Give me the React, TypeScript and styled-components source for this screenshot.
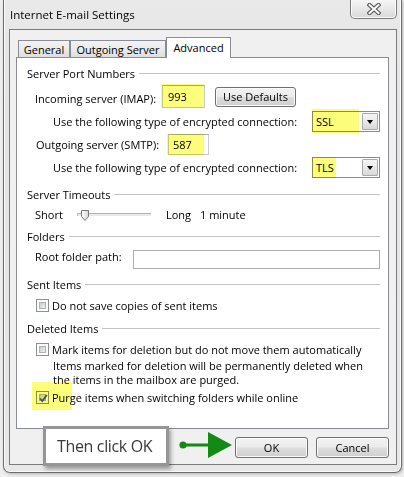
import React from "react";
import styled, { createGlobalStyle } from "styled-components";

const GlobalStyle = createGlobalStyle`
  html, body { margin: 0; padding: 0; }
  body {
    background: #eeeeee;
    width: 404px;
    height: 477px;
    overflow: hidden;
    font-family: "Open Sans", "Noto Sans", sans-serif;
    font-size: 11px;
    color: #000;
  }
`;

const Window = styled.div`
  box-sizing: border-box;
  width: 399px;
  height: 473px;
  margin-left: 3px;
  border: 1px solid #6d6d6d;
  border-top: none;
  border-radius: 0 0 7px 7px;
  background: linear-gradient(180deg, #e9e9e9 0%, #e3e3e3 25%, #e8e8e8 100%);
  box-shadow: inset 1px 0 0 #fafafa, inset -1px 0 0 #fafafa, inset 0 -1px 0 #fafafa,
    1px 1px 3px rgba(0, 0, 0, 0.25);
  display: flex;
  flex-direction: column;
`;

const TitleBar = styled.div`
  height: 29px;
  display: flex;
  align-items: flex-start;
  flex: none;
`;

const Title = styled.div`
  padding: 8px 0 0 6px;
  font-size: 11.5px;
  line-height: 14px;
  color: #000;
`;

const CloseButton = styled.div`
  box-sizing: border-box;
  margin-left: auto;
  margin-right: 4px;
  width: 47px;
  height: 19px;
  border: 1px solid #7a7a7a;
  border-top: none;
  border-radius: 0 0 5px 5px;
  background: linear-gradient(180deg, #f6f6f6 0%, #e6e6e6 55%, #d9d9d9 100%);
  box-shadow: inset 0 -1px 0 #fbfbfb, inset 1px 0 0 #fbfbfb, inset -1px 0 0 #fbfbfb;
  display: flex;
  align-items: center;
  justify-content: center;
`;

const Client = styled.div`
  box-sizing: border-box;
  position: relative;
  height: 436px;
  margin: 0 4px 0 5px;
  border: 1px solid #7b7b7b;
  background: #f0f0f0;
  padding: 7px 7px 6px 6px;
  display: flex;
  flex-direction: column;
`;

const TabRow = styled.div`
  display: flex;
  align-items: flex-end;
  height: 21px;
  padding-left: 2px;
  margin-bottom: -1px;
  position: relative;
  z-index: 1;
`;

const Tab = styled.div<{ $w: number; $active?: boolean }>`
  box-sizing: border-box;
  width: ${(p) => p.$w}px;
  height: ${(p) => (p.$active ? 21 : 17)}px;
  margin-bottom: ${(p) => (p.$active ? 0 : 1)}px;
  border: 1px solid #898c95;
  border-bottom: none;
  background: ${(p) =>
    p.$active ? "#ffffff" : "linear-gradient(180deg, #f3f3f3 0%, #ebebeb 50%, #dedede 100%)"};
  display: flex;
  align-items: center;
  justify-content: center;
  white-space: nowrap;
  padding-bottom: ${(p) => (p.$active ? 1 : 0)}px;
`;

const Panel = styled.div`
  box-sizing: border-box;
  height: 372px;
  background: #ffffff;
  border: 1px solid #898c95;
  padding: 7px 8px 0 10px;
  display: flex;
  flex-direction: column;
`;

const GroupHeader = styled.div<{ $mt: number }>`
  display: flex;
  align-items: center;
  height: 16px;
  margin-top: ${(p) => p.$mt}px;
  white-space: nowrap;
  &::after {
    content: "";
    flex: 1;
    height: 1px;
    background: #c4c4c4;
    margin-left: 4px;
  }
`;

const Row = styled.div<{ $h: number; $mt: number; $indent: number }>`
  display: flex;
  align-items: center;
  height: ${(p) => p.$h}px;
  margin-top: ${(p) => p.$mt}px;
  padding-left: ${(p) => p.$indent}px;
  white-space: nowrap;
`;

const Label = styled.span<{ $w?: number; $pt?: number }>`
  flex: none;
  width: ${(p) => (p.$w ? `${p.$w}px` : "auto")};
  padding-top: ${(p) => p.$pt ?? 0}px;
`;

const TopLabel = styled.span<{ $w: number }>`
  flex: none;
  align-self: flex-start;
  width: ${(p) => p.$w}px;
  line-height: 14px;
`;

const Marked = styled.span`
  position: relative;
  display: inline-flex;
  flex: none;
`;

const Highlight = styled.span<{ $l: number; $t: number; $w: number; $h: number }>`
  position: absolute;
  left: ${(p) => p.$l}px;
  top: ${(p) => p.$t}px;
  width: ${(p) => p.$w}px;
  height: ${(p) => p.$h}px;
  background: #fdfd7c;
  mix-blend-mode: multiply;
  pointer-events: none;
`;

const TextBox = styled.input<{ $w: number; $h: number; $pl?: number }>`
  box-sizing: border-box;
  width: ${(p) => p.$w}px;
  height: ${(p) => p.$h}px;
  border: 1px solid #c9ccd2;
  border-top-color: #abadb3;
  background: #fff;
  padding: 0 0 0 ${(p) => p.$pl ?? 4}px;
  margin: 0;
  font: inherit;
  color: #000;
  outline: none;
`;

const WideBox = styled.input`
  box-sizing: border-box;
  flex: 1;
  align-self: stretch;
  border: 1px solid #abadb3;
  background: #fff;
  margin: 0;
  font: inherit;
  outline: none;
`;

const Button = styled.div<{ $w: number; $h?: number; $ml?: number }>`
  box-sizing: border-box;
  flex: none;
  width: ${(p) => p.$w}px;
  height: ${(p) => p.$h ?? 21}px;
  margin-left: ${(p) => p.$ml ?? 0}px;
  border: 1px solid #707070;
  border-radius: 3px;
  background: linear-gradient(180deg, #f2f2f2 0%, #ebebeb 48%, #dddddd 52%, #cfcfcf 100%);
  box-shadow: inset 0 0 0 1px #fafafa;
  display: flex;
  align-items: center;
  justify-content: center;
  color: #000;
`;

const Combo = styled.div`
  box-sizing: border-box;
  position: relative;
  margin-left: auto;
  width: 68px;
  height: 21px;
  border: 1px solid #8c8c8c;
  background: #fff;
  display: flex;
  align-items: stretch;
  padding: 1px;
`;

const ComboValue = styled.span`
  flex: 1;
  display: flex;
  align-items: center;
  padding-left: 2px;
`;

const ComboArrow = styled.span`
  box-sizing: border-box;
  width: 16px;
  border: 1px solid #a9a9a9;
  border-radius: 1px;
  background: linear-gradient(180deg, #f5f5f5 0%, #e9e9e9 50%, #d8d8d8 100%);
  display: flex;
  align-items: center;
  justify-content: center;
  &::after {
    content: "";
    border-left: 3.5px solid transparent;
    border-right: 3.5px solid transparent;
    border-top: 4px solid #000;
    margin-top: 1px;
  }
`;

const Track = styled.div`
  position: relative;
  flex: none;
  width: 74px;
  height: 3px;
  margin-right: 15px;
  border-top: 1px solid #b3b3b3;
  border-left: 1px solid #c6c6c6;
  background: #e7eaea;
  box-sizing: border-box;
`;

const Thumb = styled.svg`
  position: absolute;
  left: 3px;
  top: -4px;
`;

const Box = styled.span`
  box-sizing: border-box;
  position: relative;
  flex: none;
  width: 13px;
  height: 13px;
  border: 1px solid #8e8f8f;
  background: #fff;
  margin-right: 3px;
  &::before {
    content: "";
    position: absolute;
    inset: 2px;
    border: 1px solid #aeb1b5;
    background: linear-gradient(135deg, #c9cdd1 0%, #eef0f1 100%);
  }
`;

const Tick = styled.svg`
  position: absolute;
  left: 1px;
  top: 1px;
  z-index: 1;
`;

const Description = styled.div`
  margin-top: 2px;
  padding-left: 26px;
  line-height: 14px;
`;

const Footer = styled.div`
  display: flex;
  justify-content: flex-end;
  gap: 8px;
  margin-top: 8px;
`;

const Callout = styled.div`
  position: absolute;
  left: 33px;
  top: 396px;
  box-sizing: border-box;
  width: 126px;
  height: 40px;
  border: 3px solid #969696;
  background: #fff;
  box-shadow: 2px 3px 4px rgba(0, 0, 0, 0.35);
  padding-left: 11px;
  display: flex;
  align-items: center;
  font-size: 16px;
  letter-spacing: -0.35px;
  color: #3a3a3a;
  white-space: nowrap;
  z-index: 2;
`;

const Arrow = styled.svg`
  position: absolute;
  left: 166px;
  top: 400px;
  z-index: 2;
`;

type CheckProps = { label: string; checked?: boolean; mt: number; highlight?: boolean };

const CheckRow = ({ label, checked, mt, highlight }: CheckProps) => (
  <Row $h={16} $mt={mt} $indent={9}>
    <Marked>
      <Box>
        {checked && (
          <Tick width="11" height="11" viewBox="0 0 11 11">
            <path d="M2 5.5 L4.3 8 L8.8 2" fill="none" stroke="#3d4f82" strokeWidth="1.8" />
          </Tick>
        )}
      </Box>
      {highlight && <Highlight $l={-4} $t={-9} $w={40} $h={28} />}
    </Marked>
    <span>{label}</span>
  </Row>
);

const EncRow = ({ value, mt, hl, h }: { value: string; mt: number; hl: number; h: number }) => (
  <Row $h={21} $mt={mt} $indent={26}>
    <Label>Use the following type of encrypted connection:</Label>
    <Combo>
      <ComboValue>{value}</ComboValue>
      <ComboArrow />
      <Highlight $l={-1} $t={h} $w={hl} $h={h < -1 ? 24 : 21} />
    </Combo>
  </Row>
);

export default function App() {
  return (
    <>
      <GlobalStyle />
      <Window>
        <TitleBar>
          <Title>Internet E-mail Settings</Title>
          <CloseButton>
            <svg width="14" height="12" viewBox="0 0 14 12">
              <path d="M2.5 2 L11.5 10 M11.5 2 L2.5 10" stroke="#505050" strokeWidth="4.2" strokeLinecap="square" />
              <path d="M2.5 2 L11.5 10 M11.5 2 L2.5 10" stroke="#ffffff" strokeWidth="2" strokeLinecap="square" />
            </svg>
          </CloseButton>
        </TitleBar>
        <Client>
          <TabRow>
            <Tab $w={52}>General</Tab>
            <Tab $w={96}>Outgoing Server</Tab>
            <Tab $w={65} $active>
              Advanced
            </Tab>
          </TabRow>
          <Panel>
            <GroupHeader $mt={0}>Server Port Numbers</GroupHeader>
            <Row $h={23} $mt={4} $indent={8}>
              <Label $w={127} $pt={3}>Incoming server (IMAP):</Label>
              <Marked>
                <TextBox $w={43} $h={23} $pl={5} readOnly value="993" />
                <Highlight $l={-1} $t={-1} $w={43} $h={24} />
              </Marked>
              <Button $w={81} $h={20} $ml={10}>Use Defaults</Button>
            </Row>
            <EncRow value="SSL" mt={3} hl={47} h={-3} />
            <Row $h={21} $mt={2} $indent={9}>
              <Label $w={132}>Outgoing server (SMTP):</Label>
              <Marked>
                <TextBox $w={41} $h={21} $pl={4} readOnly value="587" />
                <Highlight $l={-1} $t={0} $w={37} $h={21} />
              </Marked>
            </Row>
            <EncRow value="TLS" mt={2} hl={24} h={-1} />

            <GroupHeader $mt={8}>Server Timeouts</GroupHeader>
            <Row $h={16} $mt={4} $indent={8}>
              <Label $w={42}>Short</Label>
              <Track>
                <Thumb width="8" height="11" viewBox="0 0 8 11">
                  <defs>
                    <linearGradient id="tg" x1="0" y1="0" x2="1" y2="0">
                      <stop offset="0" stopColor="#ffffff" />
                      <stop offset="1" stopColor="#d6d6d6" />
                    </linearGradient>
                  </defs>
                  <path d="M0.5 0.5 H7.5 V6.5 L4 10.5 L0.5 6.5 Z" fill="url(#tg)" stroke="#777" strokeWidth="1" />
                </Thumb>
              </Track>
              <Label $w={34}>Long</Label>
              <Label>1 minute</Label>
            </Row>

            <GroupHeader $mt={6}>Folders</GroupHeader>
            <Row $h={19} $mt={6} $indent={8}>
              <TopLabel $w={98}>Root folder path:</TopLabel>
              <WideBox readOnly value="" />
            </Row>

            <GroupHeader $mt={7}>Sent Items</GroupHeader>
            <CheckRow mt={5} label="Do not save copies of sent items" />

            <GroupHeader $mt={7}>Deleted Items</GroupHeader>
            <CheckRow mt={5} label="Mark items for deletion but do not move them automatically" />
            <Description>
              Items marked for deletion will be permanently deleted when
              <br />
              the items in the mailbox are purged.
            </Description>
            <CheckRow mt={2} checked highlight label="Purge items when switching folders while online" />
          </Panel>
          <Footer>
            <Button $w={73}>OK</Button>
            <Button $w={73}>Cancel</Button>
          </Footer>
          <Callout>Then click OK</Callout>
          <Arrow width="60" height="30" viewBox="0 0 60 30">
            <circle cx="7" cy="15" r="3.6" fill="#138a13" />
            <rect x="7" y="13.5" width="28" height="3" fill="#138a13" />
            <polygon points="32,2 56,15 32,28" fill="#138a13" />
          </Arrow>
        </Client>
      </Window>
    </>
  );
}
